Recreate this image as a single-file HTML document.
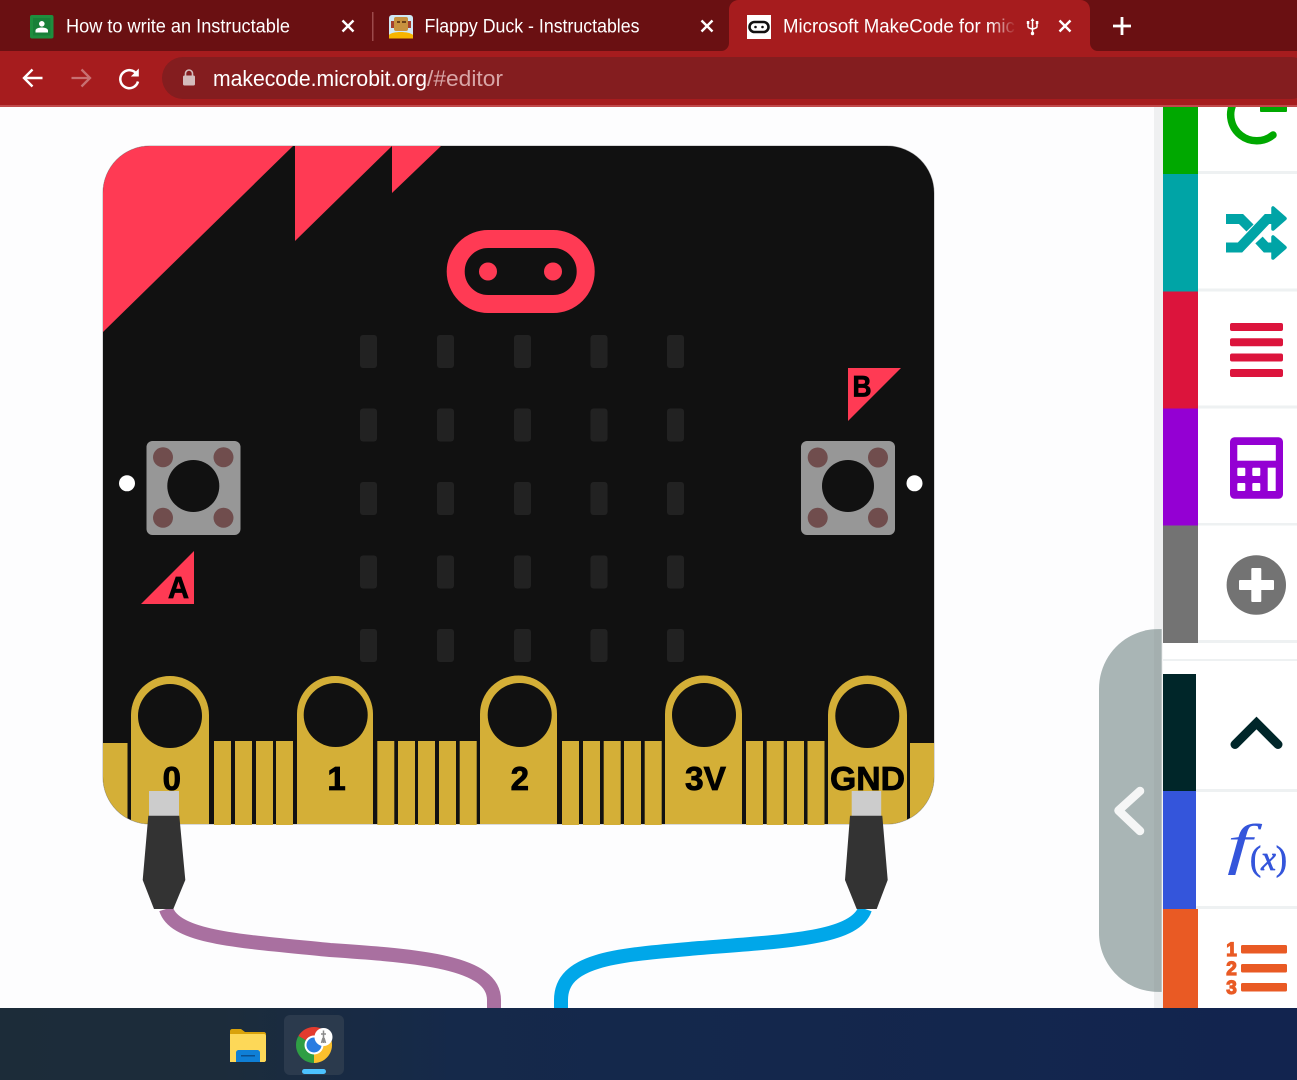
<!DOCTYPE html>
<html>
<head>
<meta charset="utf-8">
<title>Microsoft MakeCode for micro:bit</title>
<style>
html,body{margin:0;padding:0;background:#fdfdfe;overflow:hidden}
svg{display:block;position:absolute;left:0;top:0}
text{font-family:"Liberation Sans",sans-serif}
</style>
</head>
<body>
<svg width="1297" height="1080" viewBox="0 0 1297 1080" xmlns="http://www.w3.org/2000/svg">
<defs>
<clipPath id="board"><rect x="103" y="146" width="831" height="678" rx="47" ry="47"/></clipPath>
<clipPath id="tabclip"><rect x="783" y="5" width="232" height="42"/></clipPath>
<linearGradient id="fade" x1="0" x2="1" y1="0" y2="0"><stop offset="0" stop-color="#a61c1e" stop-opacity="0"/><stop offset="1" stop-color="#a61c1e"/></linearGradient>
<linearGradient id="task" x1="0" x2="1" y1="0" y2="0"><stop offset="0" stop-color="#1c2c39"/><stop offset=".17" stop-color="#1c2c3b"/><stop offset=".35" stop-color="#15294a"/><stop offset="1" stop-color="#12244f"/></linearGradient>
</defs>

<!-- page -->
<rect x="0" y="100" width="1297" height="920" fill="#fdfdfe"/>

<!-- wires -->
<path d="M166 909 C175 938 240 941 330 950 C420 956 494 962 494 1000 L494 1012" fill="none" stroke="#a970a0" stroke-width="14"/>
<path d="M865 909 C855 938 790 941 700 948 C620 955 561 958 561 1000 L561 1012" fill="none" stroke="#00a7e9" stroke-width="14"/>

<!-- board -->
<rect x="102.500" y="145.500" width="832" height="679" rx="47.500" ry="47.500" fill="#b5b5b5"/>
<rect x="103" y="146" width="831" height="678" rx="47" ry="47" fill="#111111"/>
<g clip-path="url(#board)">
<polygon points="103,146 293,146 103,332" fill="#ff3a54"/>
<rect x="103" y="743" width="24.5" height="81" fill="#d4af37"/>
<rect x="910" y="743" width="24" height="81" fill="#d4af37"/>
<path d="M131 824V715a39 39 0 0 1 78 0V824Z" fill="#d4af37"/>
<path d="M828 824V715a39.5 39.5 0 0 1 79 0V824Z" fill="#d4af37"/>
</g>
<polygon points="295,146 392,146 295,241" fill="#ff3a54"/>
<polygon points="392,146 441,146 392,193" fill="#ff3a54"/>
<rect x="455.700" y="239" width="130" height="65" rx="32.500" fill="none" stroke="#ff3a54" stroke-width="18"/>
<circle cx="488" cy="271.500" r="9" fill="#ff3a54"/>
<circle cx="553" cy="271.500" r="9" fill="#ff3a54"/>

<!-- LEDs -->
<g fill="#222222">
<rect x="360" y="335" width="17" height="33" rx="3"/><rect x="437" y="335" width="17" height="33" rx="3"/><rect x="514" y="335" width="17" height="33" rx="3"/><rect x="590.5" y="335" width="17" height="33" rx="3"/><rect x="667" y="335" width="17" height="33" rx="3"/>
<rect x="360" y="408.500" width="17" height="33" rx="3"/><rect x="437" y="408.500" width="17" height="33" rx="3"/><rect x="514" y="408.500" width="17" height="33" rx="3"/><rect x="590.5" y="408.500" width="17" height="33" rx="3"/><rect x="667" y="408.500" width="17" height="33" rx="3"/>
<rect x="360" y="482" width="17" height="33" rx="3"/><rect x="437" y="482" width="17" height="33" rx="3"/><rect x="514" y="482" width="17" height="33" rx="3"/><rect x="590.5" y="482" width="17" height="33" rx="3"/><rect x="667" y="482" width="17" height="33" rx="3"/>
<rect x="360" y="555.500" width="17" height="33" rx="3"/><rect x="437" y="555.500" width="17" height="33" rx="3"/><rect x="514" y="555.500" width="17" height="33" rx="3"/><rect x="590.5" y="555.500" width="17" height="33" rx="3"/><rect x="667" y="555.500" width="17" height="33" rx="3"/>
<rect x="360" y="629" width="17" height="33" rx="3"/><rect x="437" y="629" width="17" height="33" rx="3"/><rect x="514" y="629" width="17" height="33" rx="3"/><rect x="590.5" y="629" width="17" height="33" rx="3"/><rect x="667" y="629" width="17" height="33" rx="3"/>
</g>

<!-- buttons -->
<rect x="146.500" y="441" width="94" height="94" rx="6" fill="#979797"/>
<circle cx="193.300" cy="486" r="26" fill="#111"/>
<g fill="#704d4d"><circle cx="163" cy="457.300" r="10"/><circle cx="223.500" cy="457.300" r="10"/><circle cx="163" cy="517.800" r="10"/><circle cx="223.500" cy="517.800" r="10"/></g>
<rect x="801" y="441" width="94" height="94" rx="6" fill="#979797"/>
<circle cx="848" cy="486" r="26" fill="#111"/>
<g fill="#704d4d"><circle cx="817.700" cy="457.500" r="10"/><circle cx="878" cy="457.500" r="10"/><circle cx="817.700" cy="517.800" r="10"/><circle cx="878" cy="517.800" r="10"/></g>
<circle cx="127" cy="483.300" r="8" fill="#fff"/>
<circle cx="914.500" cy="483.300" r="8" fill="#fff"/>

<!-- A / B -->
<polygon points="194,551 141,604 194,604" fill="#ff3a54"/>
<text x="178.500" y="598" font-size="31" font-weight="700" text-anchor="middle" fill="#000" stroke="#000" stroke-width=".8" textLength="21" lengthAdjust="spacingAndGlyphs">A</text>
<polygon points="848,368 901,368 848,421" fill="#ff3a54"/>
<text x="862" y="396.500" font-size="30" font-weight="700" text-anchor="middle" fill="#000" stroke="#000" stroke-width=".8" textLength="19" lengthAdjust="spacingAndGlyphs">B</text>

<!-- pins -->
<g fill="#d4af37">
<path d="M297 824V714a38 38 0 0 1 76 0V824Z"/>
<path d="M480 824V714a38.500 38.500 0 0 1 77 0V824Z"/>
<path d="M665 824V714a38.500 38.500 0 0 1 77 0V824Z"/>
<rect x="214" y="741" width="17" height="84"/><rect x="235" y="741" width="17" height="84"/><rect x="256" y="741" width="17" height="84"/><rect x="276" y="741" width="17" height="84"/>
<rect x="377.300" y="741" width="17" height="84"/><rect x="398" y="741" width="17" height="84"/><rect x="418" y="741" width="17" height="84"/><rect x="439" y="741" width="17" height="84"/><rect x="459.700" y="741" width="17" height="84"/>
<rect x="562" y="741" width="17" height="84"/><rect x="583" y="741" width="17" height="84"/><rect x="603.700" y="741" width="17" height="84"/><rect x="624" y="741" width="17" height="84"/><rect x="644.700" y="741" width="17" height="84"/>
<rect x="746" y="741" width="17" height="84"/><rect x="766.700" y="741" width="17" height="84"/><rect x="787" y="741" width="17" height="84"/><rect x="807.500" y="741" width="17" height="84"/>
</g>
<g fill="#111111">
<circle cx="170" cy="716" r="32"/><circle cx="335.700" cy="715" r="32"/><circle cx="519.700" cy="715" r="32"/><circle cx="704" cy="715" r="32"/><circle cx="867.300" cy="716" r="32"/>
</g>
<g font-size="33" font-weight="700" fill="#000" stroke="#000" stroke-width=".8" text-anchor="middle">
<text x="171.800" y="790">0</text>
<text x="336.500" y="790">1</text>
<text x="519.800" y="790">2</text>
<text x="705.500" y="790" textLength="41" lengthAdjust="spacingAndGlyphs">3V</text>
<text x="867.500" y="790" textLength="75" lengthAdjust="spacingAndGlyphs">GND</text>
</g>

<!-- clips -->
<rect x="149" y="791" width="30" height="25" fill="#cccccc"/>
<polygon points="148.300,815.700 179.300,815.700 185.300,880 173.300,909 154,909 142.700,880" fill="#333333"/>
<rect x="851.700" y="791" width="29.500" height="25" fill="#cccccc"/>
<polygon points="850,815.700 882.300,815.700 887.700,880 876.700,909 856.700,909 845,880" fill="#333333"/>

<!-- sidebar -->
<rect x="1154" y="107" width="9" height="901" fill="#eff0f1"/>
<rect x="1163" y="107" width="134" height="901" fill="#ffffff"/>
<rect x="1163" y="107" width="35" height="67" fill="#00a800"/>
<rect x="1163" y="174" width="35" height="117.500" fill="#00a4a6"/>
<rect x="1163" y="291.500" width="35" height="117" fill="#dc143c"/>
<rect x="1163" y="408.500" width="35" height="117" fill="#9400d3"/>
<rect x="1163" y="525.500" width="35" height="117.500" fill="#737373"/>
<rect x="1163" y="674" width="33" height="117" fill="#002629"/>
<rect x="1163" y="791" width="33" height="118" fill="#3455db"/>
<rect x="1163" y="909" width="35" height="99" fill="#e95a24"/>
<g fill="#eef1f2">
<rect x="1198" y="171" width="99" height="3"/><rect x="1198" y="288.500" width="99" height="3"/><rect x="1198" y="405.500" width="99" height="3"/><rect x="1198" y="523" width="99" height="2.500"/><rect x="1198" y="640" width="99" height="3"/>
<rect x="1163" y="659" width="134" height="2"/><rect x="1196" y="789" width="101" height="3"/><rect x="1196" y="906" width="101" height="3"/>
</g>

<!-- green loop icon -->
<path d="M1233 104A26 26 0 0 0 1273 135" fill="none" stroke="#00a800" stroke-width="7.500" stroke-linecap="round"/>
<rect x="1260" y="104" width="27" height="8" rx="1" fill="#00a800"/>

<!-- shuffle -->
<g fill="none" stroke="#00a4a6" stroke-width="10">
<path d="M1226 219H1241L1250 228"/>
<path d="M1226 247.500H1240L1267 219H1276"/>
<path d="M1259 240L1266 247.500H1276"/>
</g>
<g fill="#00a4a6" stroke="#00a4a6" stroke-width="3.500" stroke-linejoin="round">
<polygon points="1285,218.500 1273,208 1273,229"/>
<polygon points="1285,247.500 1273,237 1273,258"/>
</g>

<!-- list -->
<g fill="#dc143c">
<rect x="1230" y="323" width="53" height="8" rx="2"/><rect x="1230" y="338.300" width="53" height="8" rx="2"/><rect x="1230" y="353.500" width="53" height="8" rx="2"/><rect x="1230" y="369" width="53" height="8" rx="2"/>
</g>

<!-- calculator -->
<rect x="1230" y="437.300" width="53" height="61.500" rx="4.500" fill="#9400d3"/>
<g fill="#fff">
<rect x="1237.300" y="445" width="38.500" height="15.700"/>
<rect x="1237.300" y="467.700" width="8" height="8.300" rx="1"/><rect x="1252.300" y="467.700" width="8" height="8.300" rx="1"/>
<rect x="1237.300" y="483" width="8" height="8" rx="1"/><rect x="1252.300" y="483" width="8" height="8" rx="1"/>
<rect x="1267.700" y="467.700" width="8" height="23.300"/>
</g>

<!-- plus -->
<circle cx="1256.300" cy="585" r="29.700" fill="#737373"/>
<rect x="1239" y="580" width="35" height="10" rx="1" fill="#fff"/>
<rect x="1251.300" y="568" width="10" height="34" rx="1" fill="#fff"/>

<!-- chevron up -->
<path d="M1235 744.500L1256.500 723L1278 744.500" fill="none" stroke="#002629" stroke-width="9" stroke-linecap="round" stroke-linejoin="miter"/>

<!-- f(x) -->
<text transform="translate(1227 863) scale(1.6 1)" x="0" y="0" font-size="56" font-style="italic" fill="#3455db" style="font-family:'Liberation Serif',serif">f</text>
<text x="1250" y="870" font-size="35" fill="#3455db" stroke="#3455db" stroke-width=".7" textLength="37" lengthAdjust="spacingAndGlyphs" style="font-family:'Liberation Serif',serif">(<tspan font-style="italic">x</tspan>)</text>

<!-- numbered list -->
<g fill="#e95a24">
<rect x="1241" y="945" width="46" height="8.500" rx="1.500"/><rect x="1241" y="964" width="46" height="8.500" rx="1.500"/><rect x="1241" y="983" width="46" height="8.500" rx="1.500"/>
<g font-size="19" font-weight="700" stroke="#e95a24" stroke-width="1.200" text-anchor="middle">
<text x="1231.500" y="956">1</text><text x="1231.500" y="975">2</text><text x="1231.500" y="994">3</text>
</g>
</g>

<!-- collapse tab -->
<path d="M1159 629H1162V992H1159C1125 992 1099 965 1099 933V689C1099 656 1125 629 1159 629Z" fill="#a9b5b5"/>
<rect x="1154" y="630" width="8" height="361" fill="#a4afaf"/>
<rect x="1161.700" y="629" width="1.300" height="363" fill="#f4f5f5"/>
<path d="M1140 791L1118.500 810.500L1140 831" fill="none" stroke="#f5f6f6" stroke-width="8.500" stroke-linecap="round" stroke-linejoin="round"/>

<!-- chrome frame -->
<rect x="0" y="0" width="1297" height="51" fill="#6a1012"/>
<rect x="0" y="51" width="1297" height="54" fill="#a61c1e"/>
<rect x="0" y="105" width="1297" height="2" fill="#c04a4b"/>
<rect x="162" y="57" width="1150" height="42" rx="21" fill="#841d1f"/>
<path d="M729 51H721C726 51 729 47 729 43V10C729 4 733 0 739 0H1080C1086 0 1090 4 1090 10V43C1090 47 1093 51 1098 51Z" fill="#a61c1e"/>
<rect x="372" y="12" width="1.500" height="29" fill="#9c4a4b"/>

<!-- tab 1 -->
<rect x="30" y="15" width="23.500" height="23.500" rx="2" fill="#1e8e3e"/>
<rect x="33" y="18" width="17.500" height="17.500" fill="#188038"/>
<circle cx="41.800" cy="23.800" r="2.800" fill="#fff"/>
<path d="M35.500 32.500V30.500C35.500 28.500 39 27.500 41.800 27.500C44.600 27.500 48 28.500 48 30.500V32.500Z" fill="#fff"/>
<text x="66" y="32.500" font-size="19" fill="#fff" textLength="224" lengthAdjust="spacingAndGlyphs">How to write an Instructable</text>
<path d="M342.500 20.500L353.500 31.500M353.500 20.500L342.500 31.500" stroke="#fff" stroke-width="2.400" fill="none"/>

<!-- tab 2 -->
<rect x="389" y="15" width="24" height="23.500" rx="3" fill="#cfe8f5"/>
<rect x="394" y="17" width="14" height="14" rx="2" fill="#c8923f"/>
<rect x="391" y="21" width="3" height="7" fill="#a5402e"/><rect x="408" y="21" width="3" height="7" fill="#a5402e"/>
<rect x="397" y="21" width="3" height="2" fill="#6a4018"/><rect x="402" y="21" width="4" height="2" fill="#6a4018"/>
<path d="M389 38.500V35C392 31 409 31 413 35V38.500Z" fill="#f7b500"/>
<text x="424.500" y="32.500" font-size="19" fill="#fff" textLength="215" lengthAdjust="spacingAndGlyphs">Flappy Duck - Instructables</text>
<path d="M701.500 20.500L712.500 31.500M712.500 20.500L701.500 31.500" stroke="#fff" stroke-width="2.400" fill="none"/>

<!-- tab 3 -->
<rect x="747" y="15" width="24" height="24" fill="#fff"/>
<rect x="749.500" y="22" width="19" height="10" rx="5" fill="none" stroke="#111" stroke-width="2.600"/>
<circle cx="755.500" cy="27" r="1.300" fill="#111"/><circle cx="762.500" cy="27" r="1.300" fill="#111"/>
<g clip-path="url(#tabclip)"><text x="783" y="32.500" font-size="19" fill="#fff" textLength="238" lengthAdjust="spacingAndGlyphs">Microsoft MakeCode for micr</text></g>
<rect x="990" y="8" width="26" height="36" fill="url(#fade)"/>
<g fill="none" stroke="#fff" stroke-width="1.500">
<path d="M1032.500 19V34M1028 22.500V26.500C1028 28 1030 28.500 1032.500 29C1035 28.500 1037 28 1037 26.500V22.500"/>
</g>
<path d="M1032.500 18L1030.500 21H1034.500Z" fill="#fff"/>
<rect x="1026.800" y="21" width="2.500" height="3" fill="#fff"/><rect x="1035.800" y="21" width="2.500" height="3" fill="#fff"/>
<circle cx="1032.500" cy="33.500" r="1.700" fill="#fff"/>
<path d="M1059.500 20.500L1070.500 31.500M1070.500 20.500L1059.500 31.500" stroke="#fff" stroke-width="2.400" fill="none"/>
<path d="M1113 26H1131M1122 17V35" stroke="#fff" stroke-width="2.800" fill="none"/>

<!-- toolbar -->
<path d="M42.500 78H24.500M32.500 69.500L24 78L32.500 86.500" fill="none" stroke="#fff" stroke-width="2.400"/>
<path d="M71.500 78H89.500M81.500 69.500L90 78L81.500 86.500" fill="none" stroke="#c87072" stroke-width="2.300"/>
<path d="M137 74.500A9 9 0 1 0 138 81.500" fill="none" stroke="#fff" stroke-width="2.500"/>
<path d="M138.800 68.500V76.500H130.800Z" fill="#fff"/>
<rect x="183" y="75.500" width="12" height="10" rx="1.500" fill="#d4bcbc"/>
<path d="M185.500 76V73.500A3.500 3.500 0 0 1 192.500 73.500V76" fill="none" stroke="#d4bcbc" stroke-width="1.600"/>
<text x="213" y="86" font-size="22" fill="#fff" textLength="214" lengthAdjust="spacingAndGlyphs">makecode.microbit.org</text>
<text x="427" y="86" font-size="22" fill="#d8a6a7" textLength="76" lengthAdjust="spacingAndGlyphs">/#editor</text>

<!-- taskbar -->
<rect x="0" y="1008" width="1297" height="72" fill="url(#task)"/>
<rect x="284" y="1015" width="60" height="60" rx="6" fill="#2b3a4d"/>
<path d="M230 1062V1031C230 1030 231 1029 232 1029H241L245 1032H264C265 1032 266 1033 266 1034V1060C266 1061 265 1062 264 1062Z" fill="#d9a20a"/>
<path d="M230 1062V1034H264C265 1034 266 1035 266 1036V1060C266 1061 265 1062 264 1062Z" fill="#fdd858"/>
<path d="M236 1062V1053C236 1051 237 1050 239 1050H257C259 1050 260 1051 260 1053V1062Z" fill="#0f7fd6"/>
<rect x="241" y="1055" width="14" height="1.500" fill="#0a4f8f"/>
<path d="M314 1045L298.400 1036A18 18 0 0 1 329.600 1036Z" fill="#e33b2e"/>
<path d="M314 1045L329.600 1036A18 18 0 0 1 314 1063Z" fill="#fbc02d"/>
<path d="M314 1045L314 1063A18 18 0 0 1 298.400 1036Z" fill="#2f9e44"/>
<circle cx="314" cy="1045" r="9.500" fill="#fff"/>
<circle cx="314" cy="1045" r="7.500" fill="#2a7de1"/>
<circle cx="323.500" cy="1037" r="9" fill="#fff"/>
<path d="M323.500 1030.500V1043M321 1034H326M321.500 1043L323 1038M325.500 1043L324 1038" stroke="#8a8a8a" stroke-width="1.500" fill="none"/>
<rect x="302" y="1069" width="24" height="5" rx="2.500" fill="#4cc2ff"/>
</svg>
</body>
</html>
